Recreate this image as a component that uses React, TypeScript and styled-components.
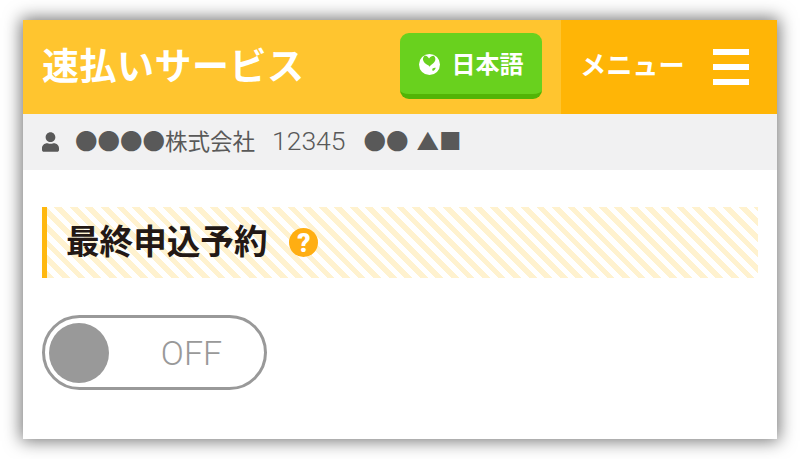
import React from "react";
import styled, { createGlobalStyle } from "styled-components";
import { FaUser } from "react-icons/fa";

const GlobalStyle = createGlobalStyle`
  html, body {
    margin: 0;
    padding: 0;
    background: #fff;
  }
  body {
    font-family: "Noto Sans CJK JP", "Noto Sans", sans-serif;
  }
`;

const Page = styled.div`
  box-sizing: border-box;
  width: 800px;
  height: 459px;
  padding: 20px 23px;
  overflow: hidden;
`;

const Frame = styled.div`
  height: 419px;
  background: #fff;
  box-shadow: 0 0 16px 2px rgba(0, 0, 0, 0.55);
`;

const Header = styled.header`
  display: flex;
  height: 94px;
  background: #ffc52f;
`;

const Brand = styled.div`
  flex: 1;
  display: flex;
  align-items: center;
  justify-content: space-between;
  padding: 0 19px;
  min-width: 0;
`;

const Title = styled.h1`
  margin: 0;
  padding-bottom: 6px;
  color: #fff;
  font-size: 37px;
  font-weight: 700;
  line-height: 1;
  letter-spacing: 0.5px;
  white-space: nowrap;
`;

const LangButton = styled.button`
  display: flex;
  align-items: center;
  justify-content: center;
  gap: 12px;
  box-sizing: border-box;
  width: 142px;
  height: 66px;
  margin: 0 0 2px;
  padding: 2px 0 0;
  border: 0;
  border-bottom: 5px solid #52b406;
  border-radius: 9px;
  background: #69d11e;
  color: #fff;
  font-family: inherit;
  font-size: 24px;
  font-weight: 700;
  line-height: 1;
  span {
    margin-bottom: 4px;
  }
  svg {
    width: 21px;
    height: 21px;
  }
`;

const Menu = styled.div`
  display: flex;
  align-items: center;
  justify-content: space-between;
  box-sizing: border-box;
  width: 216px;
  padding: 0 28px 0 19px;
  background: #ffb506;
  color: #fff;
  font-size: 26.2px;
  font-weight: 700;
`;

const MenuLabel = styled.span`
  margin-bottom: 6px;
`;

const Burger = styled.div`
  display: flex;
  flex-direction: column;
  justify-content: space-between;
  width: 36px;
  height: 36px;
  span {
    display: block;
    height: 6px;
    background: #fff;
  }
`;

const UserBar = styled.div`
  display: flex;
  align-items: center;
  height: 56px;
  padding: 0 19px;
  background: #f1f1f2;
  color: #595959;
  font-size: 22.5px;
  line-height: 1;
  white-space: nowrap;
  svg {
    width: 17px;
    height: 20px;
    margin-right: 16px;
  }
`;

const Company = styled.span`
  margin-bottom: 4px;
`;

const Code = styled.span`
  margin: 0 0 2px 17px;
  font-family: "Roboto", sans-serif;
  font-weight: 300;
  font-size: 26.5px;
`;

const UserName = styled.span`
  margin: 0 0 4px 18px;
`;

const Position = styled.span`
  margin: 0 0 4px 8px;
`;

const Content = styled.main`
  display: flex;
  flex-direction: column;
  align-items: flex-start;
  gap: 37px;
  padding: 37px 19px 0;
`;

const Heading = styled.div`
  display: flex;
  align-items: center;
  gap: 22px;
  box-sizing: border-box;
  width: 100%;
  height: 71px;
  padding-left: 19px;
  border-left: 5px solid #ffb80f;
  background: repeating-linear-gradient(
    45deg,
    #fff2cf 0,
    #fff2cf 5.5px,
    #ffffff 5.5px,
    #ffffff 11px
  );
`;

const HeadingText = styled.h2`
  margin: 0 0 6px;
  color: #231815;
  font-size: 33.6px;
  font-weight: 700;
  line-height: 1;
`;

const HelpBadge = styled.span`
  display: flex;
  align-items: center;
  justify-content: center;
  width: 29px;
  height: 29px;
  border-radius: 50%;
  background: #ffae12;
  color: #fff;
  font-family: "Roboto", sans-serif;
  font-size: 26px;
  font-weight: 900;
  line-height: 1;
`;

const Toggle = styled.div`
  display: flex;
  align-items: center;
  box-sizing: border-box;
  width: 225px;
  height: 75px;
  padding: 0 4px;
  border: 3.5px solid #999;
  border-radius: 38px;
  background: #fff;
`;

const Knob = styled.span`
  flex: none;
  width: 60px;
  height: 60px;
  border-radius: 50%;
  background: #999;
`;

const ToggleLabel = styled.span`
  flex: 1;
  padding: 1px 0 0 14px;
  text-align: center;
  color: #999;
  font-family: "Roboto", sans-serif;
  font-size: 34px;
  font-weight: 300;
`;

const GlobeIcon = () => (
  <svg viewBox="0 0 24 24" aria-hidden="true">
    <circle cx="12" cy="12" r="12" fill="#fff" />
    <path
      d="M6.5 1.8c2.2.2 3.4 1.2 5 3.2 1.5-1.9 3-2.9 5.5-3 2 1.900 2.400 5 .6 7.200-1.600 2-3.800 3.100-5.600 5.300-.6-1.700-2.400-1.900-3.600-2.800C6.300 10.300 4.600 8 4.400 5.600c.3-1.500 1-2.800 2.100-3.800z"
      fill="#69d11e"
    />
    <path d="M15.500 16.500c1.300-.8 2.800-1.100 3.700-.7-.5 1.700-1.700 3-3.300 3.600-.7-.8-1.100-2-.4-2.900z" fill="#69d11e" />
  </svg>
);

export default function App() {
  return (
    <Page>
      <GlobalStyle />
      <Frame>
        <Header>
          <Brand>
            <Title>速払いサービス</Title>
            <LangButton>
              <GlobeIcon />
              <span>日本語</span>
            </LangButton>
          </Brand>
          <Menu>
            <MenuLabel>メニュー</MenuLabel>
            <Burger>
              <span />
              <span />
              <span />
            </Burger>
          </Menu>
        </Header>
        <UserBar>
          <FaUser />
          <Company>●●●●株式会社</Company>
          <Code>12345</Code>
          <UserName>●●</UserName>
          <Position>▲■</Position>
        </UserBar>
        <Content>
          <Heading>
            <HeadingText>最終申込予約</HeadingText>
            <HelpBadge>?</HelpBadge>
          </Heading>
          <Toggle>
            <Knob />
            <ToggleLabel>OFF</ToggleLabel>
          </Toggle>
        </Content>
      </Frame>
    </Page>
  );
}
